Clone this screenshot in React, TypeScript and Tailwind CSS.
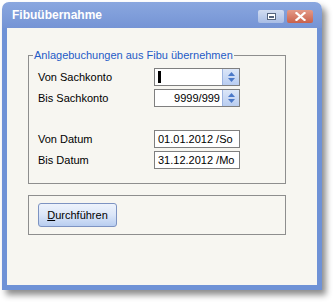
const font = { fontFamily: '"Liberation Sans", Arial, sans-serif' };

const Spinner = () => (
  <div className="w-[17px] h-full border-l border-[#9db4e0] bg-gradient-to-b from-[#dbe6f8] to-[#b9cdf0] flex flex-col items-center justify-center gap-[2px]">
    <svg width="7" height="4" viewBox="0 0 7 4">
      <path d="M0 4 L3.5 0 L7 4 Z" fill="#4a78c8" />
    </svg>
    <svg width="7" height="4" viewBox="0 0 7 4">
      <path d="M0 0 L3.5 4 L7 0 Z" fill="#4a78c8" />
    </svg>
  </div>
);

const Row = ({ label, children }: { label: string; children: React.ReactNode }) => (
  <div className="flex items-center h-[18px]">
    <span className="w-[116px] text-[11px] text-black whitespace-nowrap">{label}</span>
    {children}
  </div>
);

export default function App() {
  return (
    <div className="w-[335px] h-[304px] bg-white pl-[2px] pt-[2px]" style={font}>
      <div className="w-[320px] h-[288px] flex flex-col rounded-t-[7px] shadow-[4px_5px_6px_rgba(0,0,0,0.45)]">
        {/* title bar */}
        <div className="h-[26px] rounded-t-[7px] bg-gradient-to-b from-[#8aa7df] to-[#7594d5] flex items-center pl-[10px] pr-[9px]">
          <span className="text-white font-bold text-[12px] flex-1">Fibuübernahme</span>
          <div className="flex gap-[3px] mt-[2px]">
            <div className="w-[26px] h-[13px] rounded-[2px] bg-gradient-to-b from-[#d2ddf1] to-[#a9bde5] flex items-center justify-center">
              <div className="w-[9px] h-[7px] border border-[#55647e] bg-white flex items-end justify-center pb-[1px]">
                <div className="w-[5px] h-[2px] bg-[#55647e]" />
              </div>
            </div>
            <div className="w-[26px] h-[13px] rounded-[2px] bg-gradient-to-b from-[#e49a88] to-[#c9614b] flex items-center justify-center">
              <svg width="11" height="9" viewBox="0 0 11 9">
                <path d="M1.5 1 L9.5 8 M9.5 1 L1.5 8" stroke="white" strokeWidth="2.2" strokeLinecap="square" />
              </svg>
            </div>
          </div>
        </div>

        {/* body */}
        <div className="flex-1 bg-[#f7f6f1] border-x-[5px] border-b-[5px] border-[#6f92d6] pl-[21px] pr-[31px]">
          <fieldset className="mt-[20px] border border-[#8e8e8e] pl-[9px] pb-[14px]">
            <legend className="ml-[-5px] px-[1px] text-[11px] leading-[14px] text-[#1f5bc7] whitespace-nowrap">
              Anlagebuchungen aus Fibu übernehmen
            </legend>
            <div className="flex flex-col gap-[3px] pt-[6px]">
              <Row label="Von Sachkonto">
                <div className="w-[86px] h-full border border-[#7f7f7f] bg-white flex">
                  <div className="flex-1 flex items-center pl-[3px]">
                    <div className="w-[3px] h-[12px] bg-black" />
                  </div>
                  <Spinner />
                </div>
              </Row>
              <Row label="Bis Sachkonto">
                <div className="w-[86px] h-full border border-[#7f7f7f] bg-white flex">
                  <div className="flex-1 flex items-center justify-end pr-[2px] text-[11px]">9999/999</div>
                  <Spinner />
                </div>
              </Row>
            </div>
            <div className="flex flex-col gap-[3px] mt-[23px]">
              <Row label="Von Datum">
                <div className="w-[86px] h-full border border-[#7f7f7f] bg-white flex items-center pl-[3px] text-[11px] whitespace-nowrap">
                  01.01.2012 /So
                </div>
              </Row>
              <Row label="Bis Datum">
                <div className="w-[86px] h-full border border-[#7f7f7f] bg-white flex items-center pl-[3px] text-[11px] whitespace-nowrap">
                  31.12.2012 /Mo
                </div>
              </Row>
            </div>
          </fieldset>

          <div className="mt-[11px] h-[40px] border border-[#8e8e8e] flex items-center pl-[9px]">
            <button className="w-[79px] h-[24px] rounded-[3px] border border-[#7d93c2] bg-gradient-to-b from-[#eef3fc] via-[#dbe6f8] to-[#b8cdf0] text-[11px] text-black">
              <span className="underline">D</span>urchführen
            </button>
          </div>
        </div>
      </div>
    </div>
  );
}
